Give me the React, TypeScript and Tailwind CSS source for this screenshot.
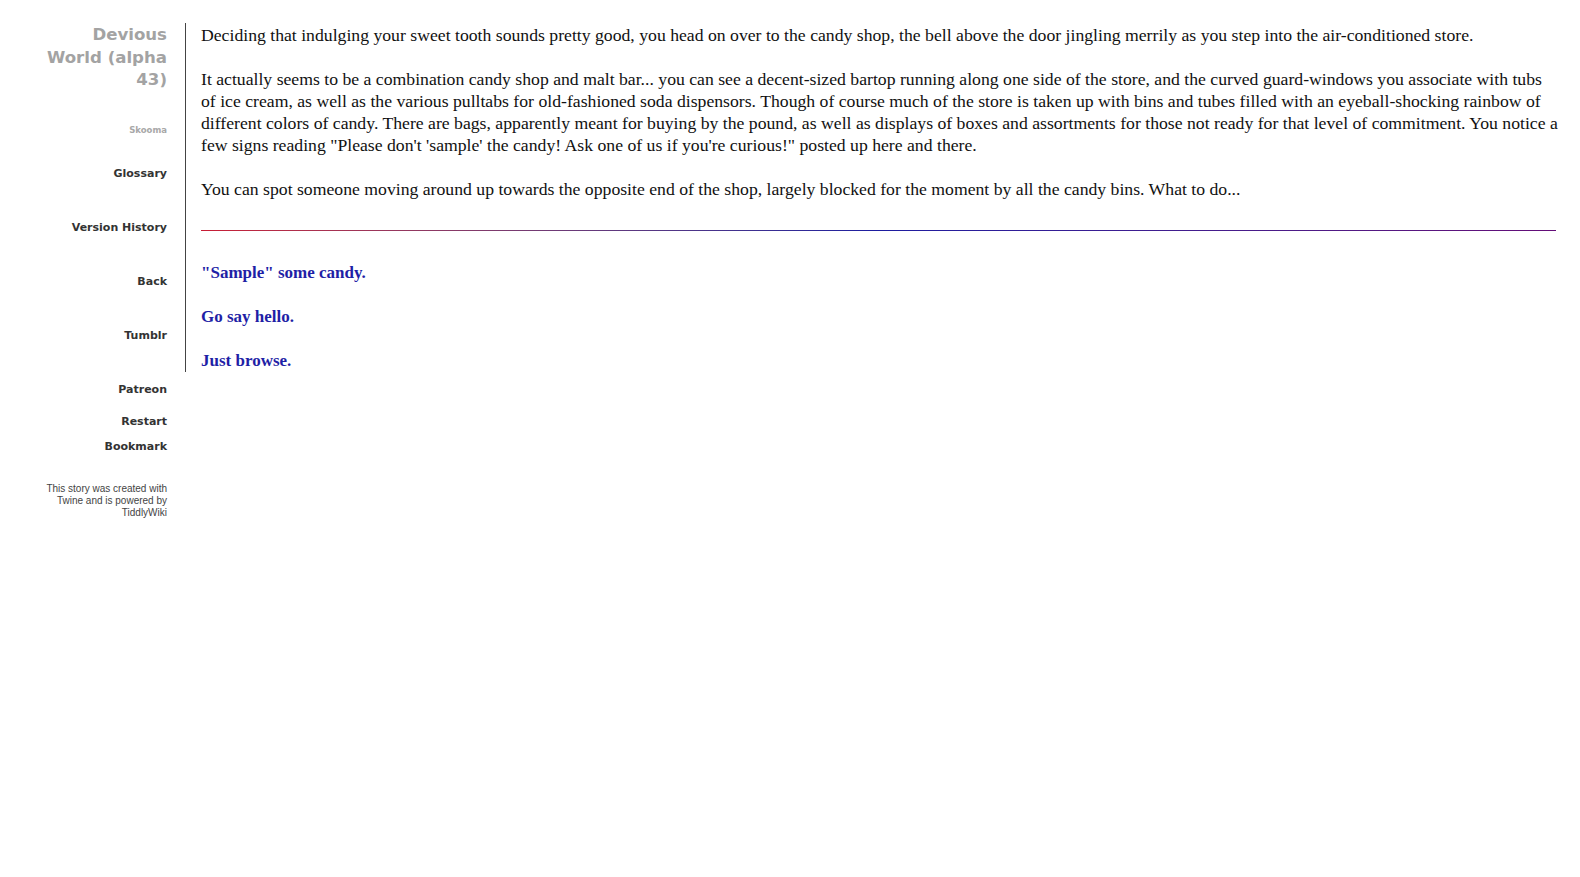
import React from "react"

const navLinks = [
  { label: "Glossary", gap: "mt-[30px]" },
  { label: "Version History", gap: "mt-[38px]" },
  { label: "Back", gap: "mt-[38px]" },
  { label: "Tumblr", gap: "mt-[38px]" },
  { label: "Patreon", gap: "mt-[38px]" },
  { label: "Restart", gap: "mt-[16px]" },
  { label: "Bookmark", gap: "mt-[9px]" },
]

const choices = ['"Sample" some candy.', "Go say hello.", "Just browse."]

function Sidebar() {
  return (
    <aside className="ml-[40px] w-[127px] shrink-0 text-right font-['DejaVu_Sans',sans-serif]">
      <h1 className="text-[16.6px] leading-[22.5px] font-bold text-[#a3a3a3] pt-[1px]">
        Devious World (alpha 43)
      </h1>
      <div className="mt-[32px] text-[8.5px] leading-[12px] font-bold text-[#a8a8a8]">Skooma</div>

      <nav className="flex flex-col">
        {navLinks.map((l) => (
          <a key={l.label} href="#" className={`${l.gap} text-[11px] leading-[16px] font-bold text-[#333]`}>
            {l.label}
          </a>
        ))}
      </nav>

      <p className="mt-[28px] text-[10px] leading-[12px] text-[#444] font-['Liberation_Sans',sans-serif]">
        This story was created with
        <br />
        Twine and is powered by
        <br />
        TiddlyWiki
      </p>
    </aside>
  )
}

function Passage() {
  return (
    <main className="ml-[18px] mr-[20px] flex-1 border-l border-[#444] pl-[15px] font-['Liberation_Serif',serif] text-[17.7px] leading-[22px] text-[#111]">
      <div className="pt-[1px]">
        <p>
          Deciding that indulging your sweet tooth sounds pretty good, you head on over to the candy shop, the bell
          above the door jingling merrily as you step into the air-conditioned store.
        </p>
        <p className="mt-[22px]">
          It actually seems to be a combination candy shop and malt bar... you can see a decent-sized bartop running
          along one side of the store, and the curved guard-windows you associate with tubs of ice cream, as well as
          the various pulltabs for old-fashioned soda dispensors. Though of course much of the store is taken up with
          bins and tubes filled with an eyeball-shocking rainbow of different colors of candy. There are bags,
          apparently meant for buying by the pound, as well as displays of boxes and assortments for those not ready
          for that level of commitment. You notice a few signs reading "Please don't 'sample' the candy! Ask one of
          us if you're curious!" posted up here and there.
        </p>
        <p className="mt-[22px]">
          You can spot someone moving around up towards the opposite end of the shop, largely blocked for the moment
          by all the candy bins. What to do...
        </p>
      </div>

      {/* <--- divider ---> */}
      <div className="mt-[30px] mr-[4px] h-px bg-gradient-to-r from-[#c81c34] via-[#1c1ca0] to-[#640c78]" />

      <div className="mt-[31px] flex flex-col gap-[22px] text-[17px]">
        {choices.map((c) => (
          <a key={c} href="#" className="font-bold text-[#1f1fa6]">
            {c}
          </a>
        ))}
      </div>
    </main>
  )
}

export default function App() {
  return (
    <div className="min-h-screen bg-white pt-[23px]">
      <div className="flex items-start">
        <Sidebar />
        <Passage />
      </div>
    </div>
  )
}
